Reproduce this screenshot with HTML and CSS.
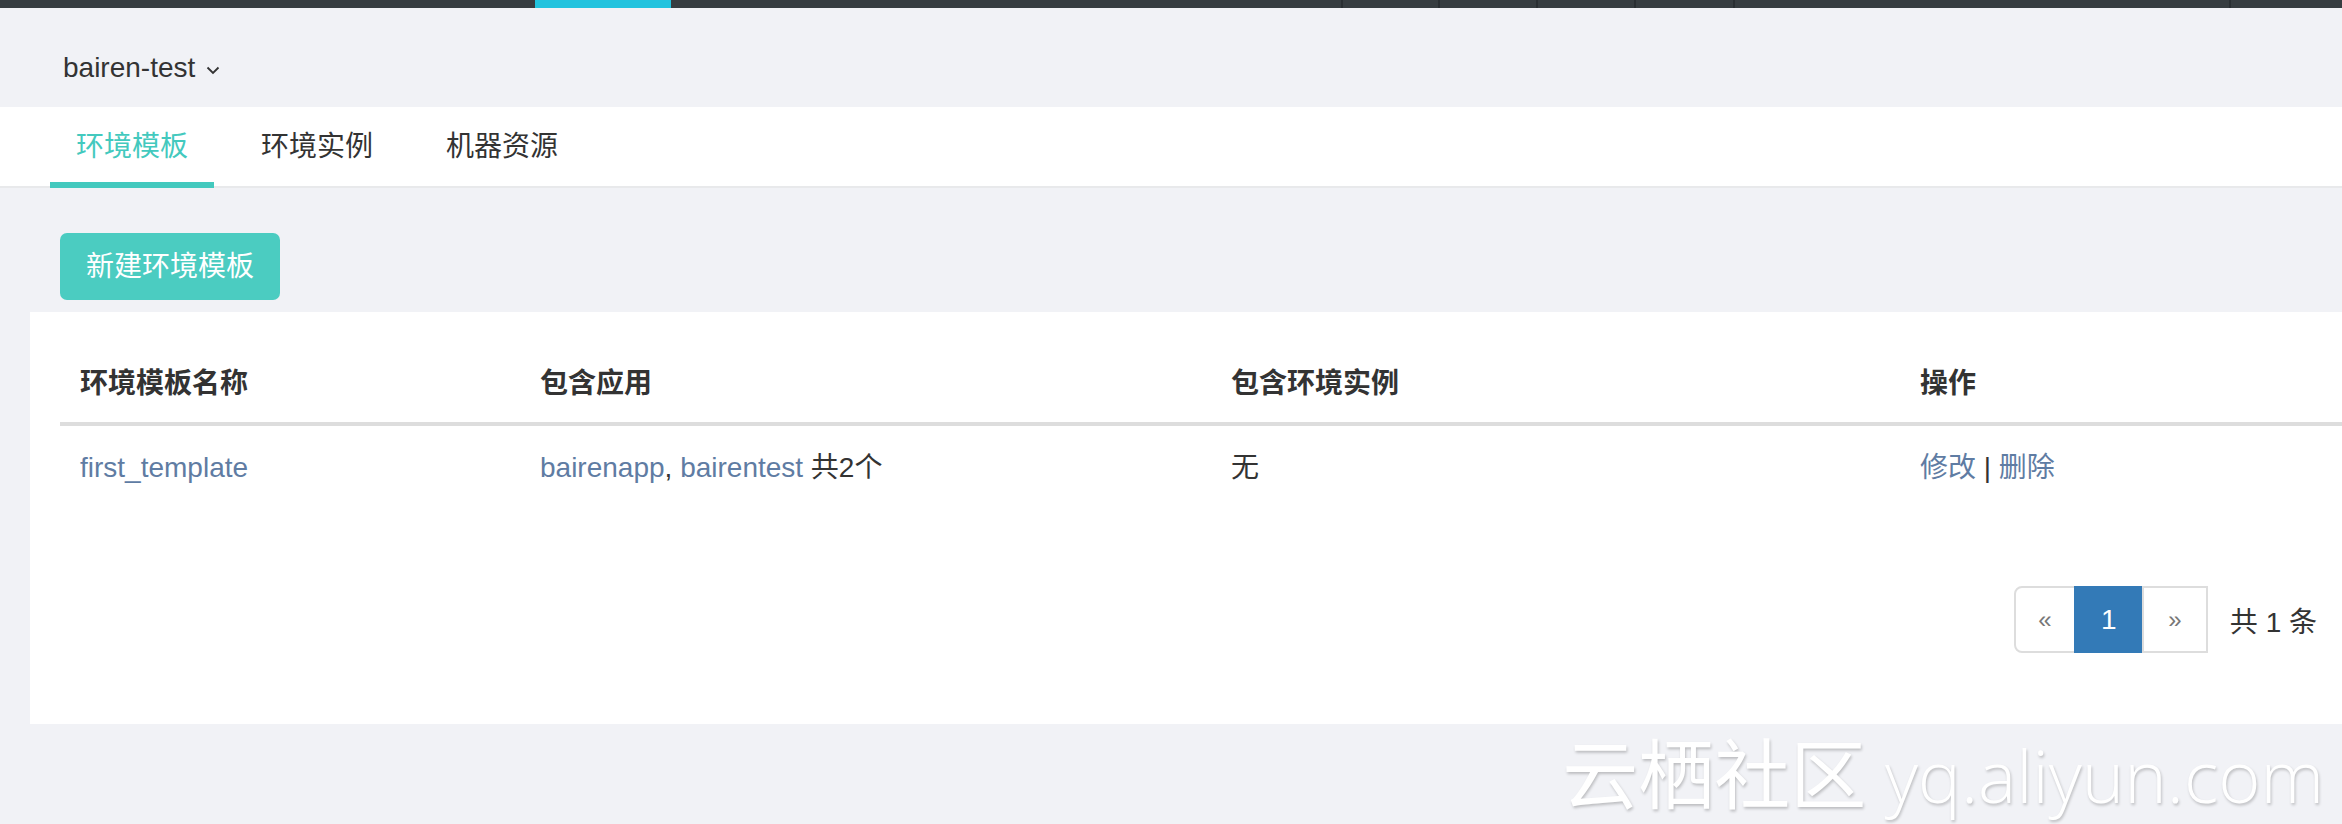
FILE: index.html
```html
<!DOCTYPE html>
<html lang="zh-CN">
<head>
<meta charset="utf-8">
<title>环境模板</title>
<link rel="stylesheet" href="styles.css">
</head>
<body>
<div class="topbar">
  <span class="seg seg-a"></span>
  <span class="seg seg-cyan"></span>
  <span class="seg seg-b"></span>
  <span class="seg seg-c div"></span>
  <span class="seg seg-d div"></span>
  <span class="seg seg-e div"></span>
  <span class="seg seg-f div"></span>
  <span class="seg seg-g div"></span>
  <span class="seg seg-h div"></span>
</div>
<div class="header">
  <span class="project">bairen-test</span>
  <svg class="chev" width="14" height="9" viewBox="0 0 14 9"><path d="M1.5 1.5 L7 7 L12.5 1.5" fill="none" stroke="#333" stroke-width="1.8"/></svg>
</div>
<div class="tabs">
  <div class="tab active">环境模板</div>
  <div class="tab">环境实例</div>
  <div class="tab">机器资源</div>
</div>
<div class="main">
  <button class="btn-new">新建环境模板</button>
  <div class="card">
    <table class="grid">
      <colgroup>
        <col class="c1"><col class="c2"><col class="c3"><col class="c4">
      </colgroup>
      <thead>
        <tr><th>环境模板名称</th><th>包含应用</th><th>包含环境实例</th><th>操作</th></tr>
      </thead>
      <tbody>
        <tr>
          <td><a class="lnk">first_template</a></td>
          <td><a class="lnk">bairenapp</a>, <a class="lnk">bairentest</a> 共2个</td>
          <td>无</td>
          <td><a class="lnk">修改</a> | <a class="lnk">删除</a></td>
        </tr>
      </tbody>
    </table>
    <div class="pager-row">
      <ul class="pager">
        <li class="pg pg-prev">«</li>
        <li class="pg pg-cur">1</li>
        <li class="pg pg-next">»</li>
      </ul>
      <span class="total">共 1 条</span>
    </div>
  </div>
</div>
<div class="watermark"><span class="wm-cjk">云栖社区</span> <span class="wm-latin">yq.aliyun.com</span></div>
</body>
</html>
```
FILE: styles.css
```css
* { box-sizing: border-box; }
html, body { margin: 0; padding: 0; }
body {
  width: 2342px;
  height: 824px;
  overflow: hidden;
  background: #f1f2f6;
  font-family: "Liberation Sans", "Noto Sans CJK SC", sans-serif;
  font-size: 28px;
  color: #333;
  position: relative;
}

.topbar { display: flex; height: 8px; background: #373d41; }
.seg { display: block; height: 8px; }
.seg-a { width: 535px; }
.seg-cyan { width: 136px; background: #22c3de; }
.seg-b { width: 670px; }
.seg-c { width: 97px; }
.seg-d { width: 98px; }
.seg-e { width: 98px; }
.seg-f { width: 99px; }
.seg-g { width: 496px; }
.seg-h { flex: 1; }
.div { border-left: 2px solid #2a2f33; }

.header {
  display: flex;
  align-items: center;
  height: 99px;
  padding: 40px 0 19px 63px;
}
.project { line-height: 40px; color: #333; }
.chev { margin-left: 11px; margin-top: 4px; }

.tabs {
  display: flex;
  gap: 21px;
  height: 81px;
  padding-left: 50px;
  background: #fff;
  box-shadow: inset 0 -2px 0 #e8e9eb;
}
.tab {
  height: 81px;
  padding: 2px 26px 0;
  line-height: 76px;
  color: #333;
  border-bottom: 6px solid transparent;
}
.tab.active { color: #43c9be; border-bottom-color: #43c9be; }

.main { padding: 45px 0 0 30px; }
.btn-new {
  display: block;
  margin-left: 30px;
  height: 67px;
  padding: 0 26px;
  border: 0;
  border-radius: 7px;
  background: #4bccc1;
  color: #fff;
  font-family: inherit;
  font-size: 28px;
  line-height: 67px;
}

.card {
  margin-top: 12px;
  height: 412px;
  padding: 0 0 0 30px;
  background: #fff;
}
.grid { width: 100%; border-collapse: collapse; table-layout: fixed; }
.c1 { width: 460px; }
.c2 { width: 691px; }
.c3 { width: 689px; }
.grid th {
  text-align: left;
  font-weight: bold;
  line-height: 40px;
  padding: 52px 20px 18px;
  border-bottom: 4px solid #ddd;
  color: #333;
}
.grid td {
  line-height: 40px;
  padding: 22px 20px;
  color: #333;
}
.lnk { color: #5f7ca3; text-decoration: none; }

.pager-row {
  display: flex;
  justify-content: flex-end;
  align-items: center;
  margin-top: 76px;
  padding-right: 25px;
}
.pager { display: flex; list-style: none; margin: 0; padding: 0; }
.pg {
  height: 67px;
  border: 2px solid #ddd;
  margin-left: -2px;
  display: flex;
  align-items: center;
  justify-content: center;
  background: #fff;
}
.pg-prev { width: 62px; margin-left: 0; border-radius: 8px 0 0 8px; color: #777; font-size: 24px; }
.pg-cur { width: 70px; background: #337ab7; border-color: #337ab7; color: #fff; }
.pg-next { width: 66px; color: #777; font-size: 24px; }
.total { margin-left: 22px; color: #333; }

.watermark {
  position: absolute;
  right: 18px;
  top: 730px;
  font-family: "Open Sans", "Noto Sans CJK SC", sans-serif;
  font-weight: 300;
  font-size: 72px;
  line-height: 80px;
  color: #fff;
  text-shadow: 1px 2px 3px rgba(0,0,0,0.22);
  white-space: nowrap;
}
.wm-cjk { font-family: "Noto Sans CJK SC", sans-serif; font-size: 76px; font-weight: 400; line-height: 80px; }
.wm-latin { font-weight: 300; line-height: 80px; }
```
